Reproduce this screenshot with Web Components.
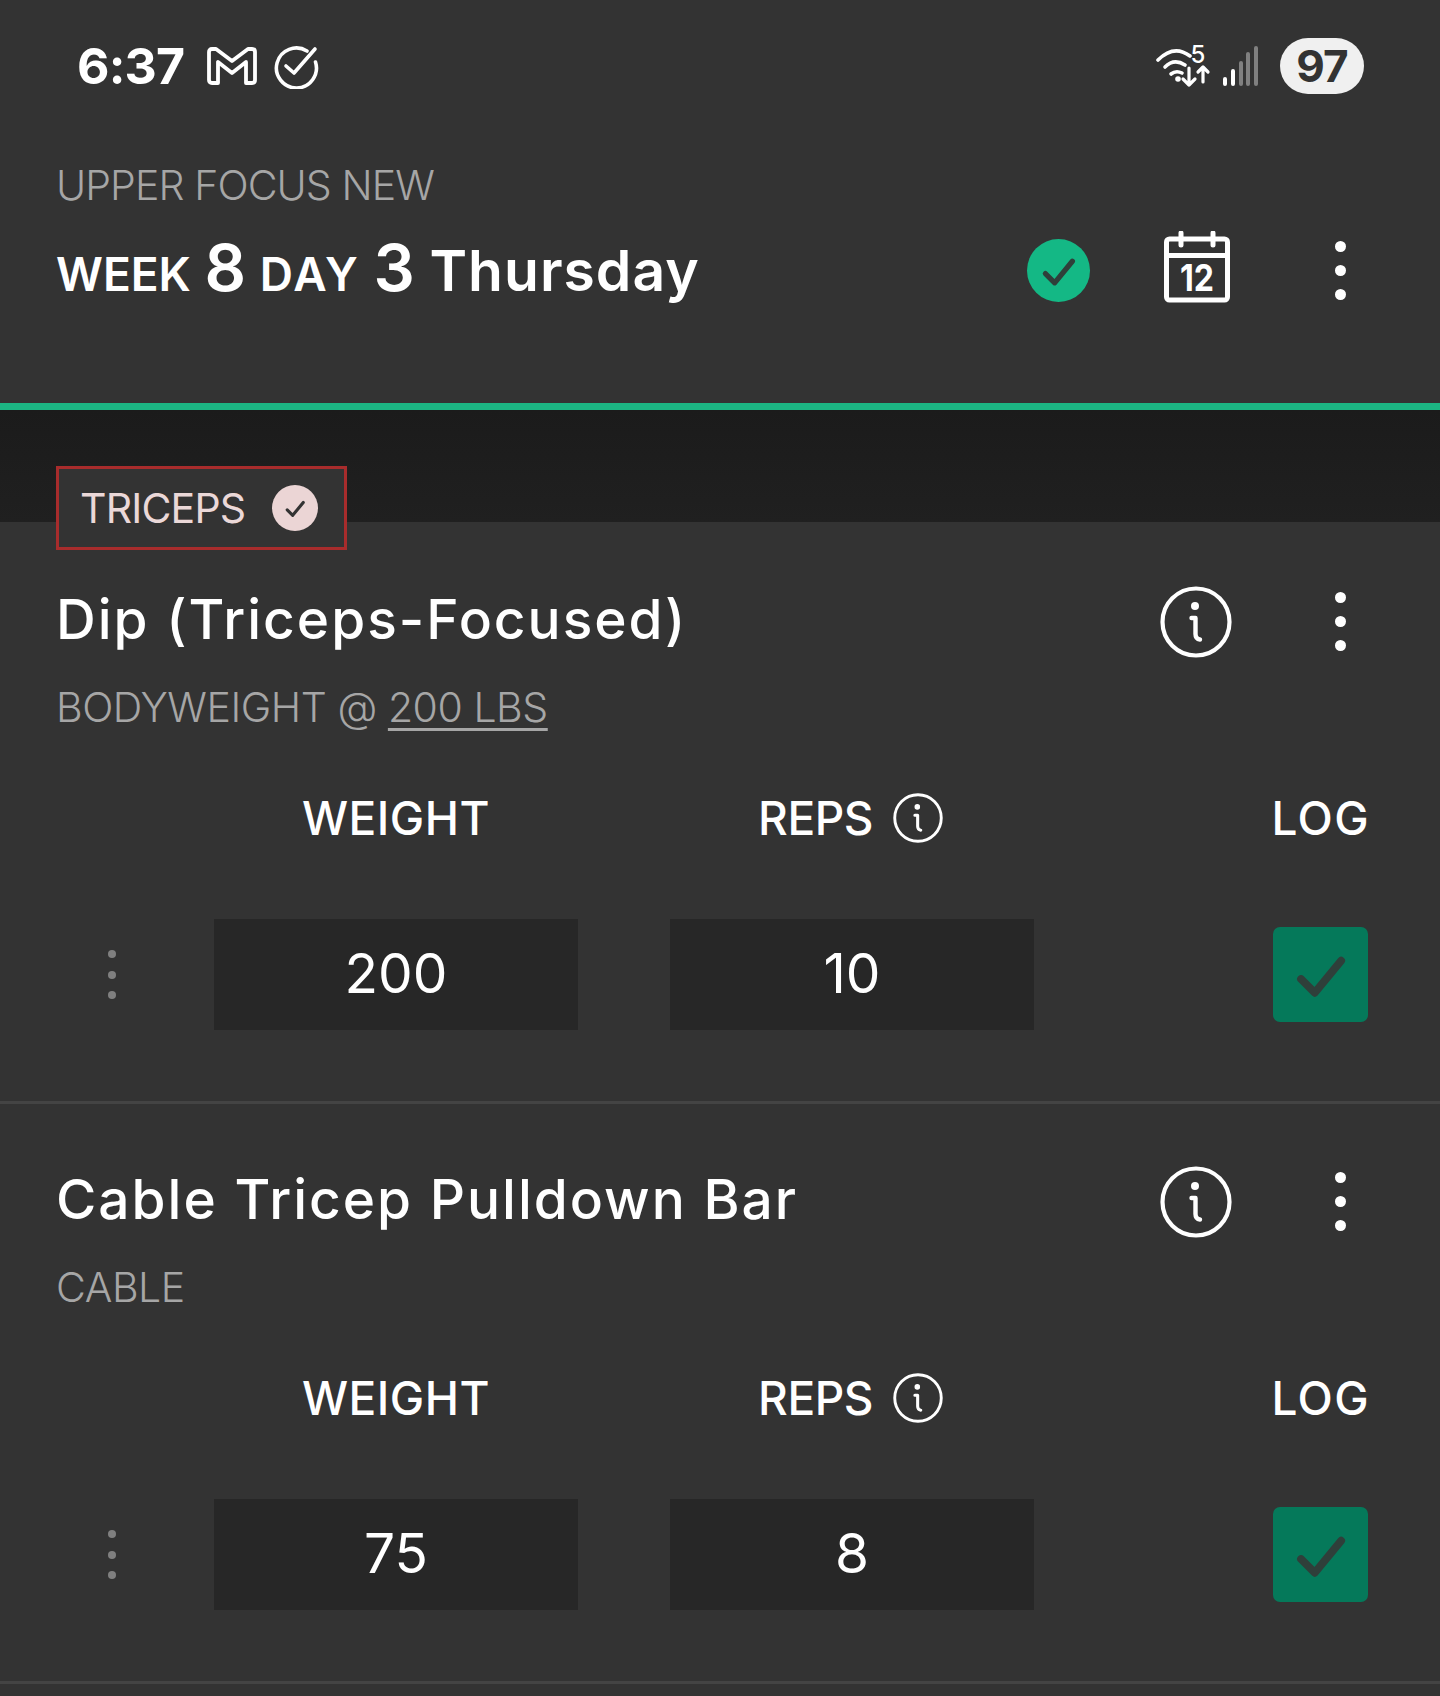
<!DOCTYPE html>
<html>
<head>
<meta charset="utf-8">
<style>
  html, body { margin: 0; background: #333333; }
  body { height: 1696px; overflow: hidden; font-family: Inter, "Open Sans", sans-serif; color: #fff; }
</style>
</head>
<body>
  <app-status-bar></app-status-bar>
  <workout-header plan="UPPER FOCUS NEW" week="8" day="3" weekday="Thursday"></workout-header>
  <muscle-band name="TRICEPS"></muscle-band>
  <exercise-card first title="Dip (Triceps-Focused)" kind="BODYWEIGHT @" link="200 LBS" weight="200" reps="10"></exercise-card>
  <exercise-card title="Cable Tricep Pulldown Bar" kind="CABLE" weight="75" reps="8"></exercise-card>

<script>
// shared icons
const ICONS = {
  info: `<svg style="display:block" viewBox="0 0 72 72" width="100%" height="100%" fill="none" stroke="#fff" stroke-width="4.2" stroke-linecap="round" stroke-linejoin="round">
      <circle cx="36" cy="36" r="33.5"/>
      <circle cx="35" cy="20" r="4" fill="#fff" stroke="none"/>
      <path d="M31.5 32H35.5V48Q35.5 53 40 53.5" stroke-width="4.4"/>
    </svg>`,
  check: `<svg style="display:block" viewBox="0 0 24 24" width="100%" height="100%" fill="none" stroke="currentColor" stroke-width="3.4" stroke-linecap="round" stroke-linejoin="round">
      <path d="M3.5 14l6 6L21 6"/>
    </svg>`
};

class KebabMenu extends HTMLElement {
  constructor() {
    super();
    this.attachShadow({ mode: 'open' });
  }
  connectedCallback() {
    this.shadowRoot.innerHTML = `
      <style>
        :host { display: flex; flex-direction: column; align-items: center; gap: var(--gap, 13px); width: var(--box, 22px); }
        i { display: block; width: var(--dot, 11px); height: var(--dot, 11px); border-radius: 50%; background: var(--dot-color, #fff); }
      </style>
      <i></i><i></i><i></i>`;
  }
}
customElements.define('kebab-menu', KebabMenu);

class AppStatusBar extends HTMLElement {
  constructor() {
    super();
    this.attachShadow({ mode: 'open' });
  }
  connectedCallback() {
    this.shadowRoot.innerHTML = `
      <style>
        :host { display: flex; align-items: center; height: 132px; padding: 0 76px 0 77px; box-sizing: border-box; }
        .time { font-size: 50px; font-weight: 700; letter-spacing: -0.8px; line-height: 1; width: 114px; }
        .left svg { display: block; }
        .left { display: flex; align-items: center; gap: 16px; }
        .right { margin-left: auto; display: flex; align-items: center; }
        .pill { width: 84px; height: 56px; border-radius: 28px; background: #f0f0f0; color: #333; font-size: 44px; font-weight: 700; letter-spacing: -1px;
                display: flex; align-items: center; justify-content: center; margin-left: 21px; }
      </style>
      <div class="left">
        <div class="time">6:37</div>
        <svg width="50" height="38" viewBox="0 0 50 38" fill="none" stroke="#fff" stroke-width="3.8" stroke-linejoin="round">
          <path d="M2 5Q2 2 5 2H9L25 14L41 2H45Q48 2 48 5V33Q48 36 45 36H39V15L25 26L11 15V36H5Q2 36 2 33Z"/>
        </svg>
        <svg width="46" height="46" viewBox="0 0 46 46" fill="none" stroke="#fff" stroke-width="3.6" stroke-linecap="round" stroke-linejoin="round">
          <path d="M34 8A20 20 0 1 0 42.5 19"/>
          <path d="M13 23L21 30L42 6"/>
        </svg>
      </div>
      <div class="right">
        <svg width="56" height="54" viewBox="0 0 56 54" fill="none" stroke="#fff" stroke-width="3.6" stroke-linecap="round" stroke-linejoin="round">
          <path d="M2 21Q18 5 34 17"/>
          <path d="M9 28Q18 19 29 26"/>
          <path d="M15 35Q20 31 26 34"/>
          <circle cx="22" cy="40" r="2.8" fill="#fff" stroke="none"/>
          <text x="34.5" y="24" font-family="Inter, sans-serif" font-size="24" font-weight="500" fill="#fff" stroke="none">5</text>
          <path d="M33 29V46M27 40L33 46L39 40" stroke-width="3.2"/>
          <path d="M47 43V28M42 33L47 28L52 33" stroke-width="3.2"/>
        </svg>
        <svg style="margin-left:10px" width="37" height="40" viewBox="0 0 37 40" fill="none" stroke-width="4" stroke-linecap="round">
          <path d="M3 33V38M11 25V38" stroke="#fff"/>
          <path d="M19 17V38M26 8V38M34 2V38" stroke="#808080"/>
        </svg>
        <div class="pill">97</div>
      </div>`;
  }
}
customElements.define('app-status-bar', AppStatusBar);

class WorkoutHeader extends HTMLElement {
  constructor() {
    super();
    this.attachShadow({ mode: 'open' });
  }
  connectedCallback() {
    const a = (n) => this.getAttribute(n) || '';
    this.shadowRoot.innerHTML = `
      <style>
        :host { display: block; height: 278px; padding: 26px 0 0 56px; box-sizing: border-box; border-bottom: 7px solid #1cb583; }
        .plan { font-size: 41px; font-weight: 300; line-height: 54px; color: #a6a6a6; letter-spacing: -0.9px; }
        .row { display: flex; align-items: center; height: 72px; margin-top: 22px; padding-right: 89px; }
        .title { font-weight: 600; font-size: 46px; white-space: nowrap; line-height: 72px; margin-top: 1px; word-spacing: 2px; }
        .num { font-size: 65px; font-weight: 600; }
        .sp { letter-spacing: 2px; }
        .day { font-size: 57px; letter-spacing: 1px; margin-left: 1px; }
        .actions { margin-left: auto; display: flex; align-items: center; }
        .done { width: 63px; height: 63px; border-radius: 50%; background: #14b885; color: #2f3f3a; padding: 13px; box-sizing: border-box; margin-right: 1px; }
        .cal { display: block; margin: -6px 0 0 73px; }
        kebab-menu { margin-left: 99px; }
      </style>
      <div class="plan">${a('plan')}</div>
      <div class="row">
        <div class="title"><span>WEEK</span> <span class="num">${a('week')}</span> <span class="sp">DAY</span> <span class="num">${a('day')}</span> <span class="day">${a('weekday')}</span></div>
        <div class="actions">
          <div class="done">${ICONS.check}</div>
          <svg class="cal" width="66" height="72" viewBox="0 0 66 72" fill="none" stroke="#fff" stroke-linecap="round" stroke-linejoin="round">
            <rect x="2.5" y="8" width="61" height="61" rx="3" stroke-width="5"/>
            <path d="M2.5 24.5H63.5" stroke-width="5"/>
            <path d="M17 2V14M49 2V14" stroke-width="5"/>
            <text x="33" y="60" text-anchor="middle" font-family="Inter, sans-serif" font-size="37" font-weight="700" fill="#fff" stroke="none" textLength="34" lengthAdjust="spacingAndGlyphs">12</text>
          </svg>
          <kebab-menu></kebab-menu>
        </div>
      </div>`;
  }
}
customElements.define('workout-header', WorkoutHeader);

class MuscleBand extends HTMLElement {
  constructor() {
    super();
    this.attachShadow({ mode: 'open' });
  }
  connectedCallback() {
    this.shadowRoot.innerHTML = `
      <style>
        :host { display: block; height: 112px; padding: 56px 0 0 56px; box-sizing: border-box; background: linear-gradient(#1b1b1b, #202020); position: relative; }
        .tag { display: inline-flex; align-items: center; height: 84px; width: 291px; box-sizing: border-box; padding-left: 21px;
               border: 3px solid #a82c2c; background: #333; color: #ebd8d8; font-size: 41px; font-weight: 400; letter-spacing: -0.8px; }
        .ok { width: 46px; height: 46px; border-radius: 50%; background: #ebd5d5; color: #333; margin-left: 27px; padding: 12px; box-sizing: border-box; }
      </style>
      <div class="tag"><span>${this.getAttribute('name')}</span><div class="ok">${ICONS.check}</div></div>`;
  }
}
customElements.define('muscle-band', MuscleBand);

class SetRow extends HTMLElement {
  constructor() {
    super();
    this.attachShadow({ mode: 'open' });
  }
  connectedCallback() {
    this.shadowRoot.innerHTML = `
      <style>
        :host { display: grid; grid-template-columns: 214px 364px 92px 364px 1fr; }
        .h { font-size: 46px; font-weight: 500; line-height: 60px; height: 60px; display: flex; align-items: center; justify-content: center; position: relative; top: -2px; }
        .w { letter-spacing: 0.5px; }
        .r { letter-spacing: -0.5px; padding-right: 3px; box-sizing: border-box; }
        .log { justify-content: flex-end; padding-right: 70px; letter-spacing: 1.4px; }
        .tip { width: 50px; height: 50px; margin-left: 20px; }
        .cell { height: 111px; margin-top: 69px; background: #272727; display: flex; align-items: center; justify-content: center; font-size: 55px; font-weight: 400; padding-bottom: 4px; box-sizing: border-box; }
        .drag { margin-top: 69px; height: 111px; display: flex; align-items: center; padding-left: 101px;
                --dot: 8px; --gap: 12.5px; --box: 22px; --dot-color: #808080; }
        .log-cell { margin-top: 69px; height: 111px; display: flex; align-items: center; justify-content: flex-end; padding-right: 72px; }
        .box { width: 95px; height: 95px; border-radius: 7px; background: #05795a; color: #2f3f3a; padding: 20px; box-sizing: border-box; }
      </style>
      <div></div>
      <div class="h w">WEIGHT</div>
      <div></div>
      <div class="h r">REPS<div class="tip">${ICONS.info}</div></div>
      <div class="h log">LOG</div>
      <div class="drag"><kebab-menu></kebab-menu></div>
      <div class="cell">${this.getAttribute('weight')}</div>
      <div></div>
      <div class="cell">${this.getAttribute('reps')}</div>
      <div class="log-cell"><div class="box">${ICONS.check}</div></div>`;
  }
}
customElements.define('set-row', SetRow);

class ExerciseCard extends HTMLElement {
  constructor() {
    super();
    this.attachShadow({ mode: 'open' });
  }
  connectedCallback() {
    const a = (n) => this.getAttribute(n) || '';
    const link = a('link') ? ` <u>${a('link')}</u>` : '';
    this.shadowRoot.innerHTML = `
      <style>
        :host { display: block; padding-top: 62px; border-bottom: 3px solid #444; padding-bottom: 71px; }
        :host([first]) { padding-top: 64px; }
        .head { display: flex; align-items: center; height: 71px; padding: 0 89px 0 56px; }
        .name { font-size: 55px; font-weight: 500; white-space: nowrap; letter-spacing: 2px; margin-top: -6px; }
        .more { width: 72px; height: 72px; margin-left: auto; }
        kebab-menu { margin-left: 97px; }
        .sub { margin: 25px 0 58px 56px; font-size: 41px; font-weight: 300; line-height: 50px; color: #a6a6a6; letter-spacing: -0.45px; }
        u { text-underline-offset: 6px; text-decoration-thickness: 3px; }
      </style>
      <div class="head">
        <div class="name">${a('title')}</div>
        <div class="more">${ICONS.info}</div>
        <kebab-menu></kebab-menu>
      </div>
      <div class="sub">${a('kind')}${link}</div>
      <set-row weight="${a('weight')}" reps="${a('reps')}"></set-row>`;
  }
}
customElements.define('exercise-card', ExerciseCard);
</script>
</body>
</html>
